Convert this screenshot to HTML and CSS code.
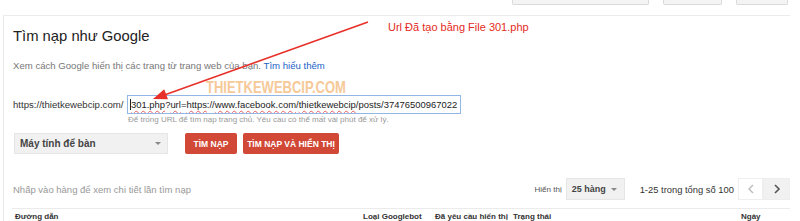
FILE: index.html
```html
<!DOCTYPE html>
<html lang="vi">
<head>
<meta charset="utf-8">
<link rel="stylesheet" href="styles.css">
</head>
<body>
<div class="page">
  <div class="topbar">
    <div class="tb-btn tb-1"></div>
    <div class="tb-btn tb-2"></div>
    <div class="tb-btn tb-3"></div>
  </div>
  <div class="card">
    <div class="title">Tìm nạp như Google</div>
    <div class="subtitle">Xem cách Google hiển thị các trang từ trang web của bạn. <span class="link">Tìm hiểu thêm</span></div>
    <div class="url-row">
      <div class="url-label">https://thietkewebcip.com/</div>
      <div class="url-input"><span class="caret"></span><span class="sp">301.php</span>?<span class="sp">url</span>=<span class="sp">https</span>://<span class="sp">www.facebook.com</span>/<span class="sp">thietkewebcip</span>/posts/37476500967022</div>
    </div>
    <div class="help">Để trống URL để tìm nạp trang chủ. Yêu cầu có thể mất vài phút để xử lý.</div>
    <div class="controls">
      <div class="select select-device"><span>Máy tính để bàn</span><span class="caret-down"></span></div>
      <div class="btn btn-fetch">TÌM NẠP</div>
      <div class="btn btn-render">TÌM NẠP VÀ HIỂN THỊ</div>
    </div>
    <div class="list-row">
      <div class="hint">Nhấp vào hàng để xem chi tiết lần tìm nạp</div>
      <div class="pager">
        <span class="show-label">Hiển thị</span>
        <div class="select select-rows"><span>25 hàng</span><span class="caret-down"></span></div>
        <span class="count">1-25 trong tổng số 100</span>
        <div class="nav nav-prev"><svg width="8" height="10" viewBox="0 0 8 10"><path d="M6 1 L2 5 L6 9" fill="none" stroke="#bbb" stroke-width="1.4"/></svg></div>
        <div class="nav nav-next"><svg width="8" height="10" viewBox="0 0 8 10"><path d="M2 1 L6 5 L2 9" fill="none" stroke="#555" stroke-width="1.6"/></svg></div>
      </div>
    </div>
    <div class="divider"></div>
    <div class="thead">
      <span>Đường dẫn</span>
      <span>Loại Googlebot</span>
      <span>Đã yêu cầu hiển thị</span>
      <span>Trạng thái</span>
      <span>Ngày</span>
    </div>
  </div>

  <div class="note">Url Đã tạo bằng File 301.php</div>
  <div class="watermark">THIETKEWEBCIP.COM</div>
  <svg class="arrow" width="800" height="221" viewBox="0 0 800 221">
    <line x1="368" y1="22" x2="163" y2="95.5" stroke="#e8302a" stroke-width="1.6"/>
    <polygon points="153,99 168,99.2 164.2,89.2" fill="#e8302a"/>
  </svg>
</div>
</body>
</html>
```
FILE: styles.css
```css
html, body {
  margin: 0;
  padding: 0;
  background: #fff;
}
.page {
  position: relative;
  width: 800px;
  height: 221px;
  overflow: hidden;
  font-family: "Liberation Sans", Arial, sans-serif;
  color: #333;
}
.topbar {
  height: 15px;
  display: flex;
  justify-content: flex-end;
  gap: 14px;
  padding-right: 12px;
  box-sizing: border-box;
}
.tb-btn {
  height: 4px;
  border: 1px solid #dadada;
  border-top: 0;
  background: #f4f4f4;
  border-radius: 0 0 2px 2px;
}
.tb-1 { width: 135px; }
.tb-2 { width: 57px; }
.tb-3 { width: 50px; }
.card {
  margin-left: 3px;
  width: 787px;
  height: 206px;
  box-sizing: border-box;
  border-top: 1px solid #ececec;
  border-left: 1px solid #e8e8e8;
  padding-left: 9px;
}
.title {
  margin-top: 10px;
  font-size: 14.8px;
  line-height: 20px;
  color: #222;
}
.subtitle {
  margin-top: 13px;
  font-size: 9.6px;
  line-height: 14px;
  color: #777;
}
.link { color: #1a5fc8; }
.url-row {
  margin-top: 22px;
  display: flex;
  align-items: center;
  height: 19px;
}
.url-label {
  flex: 0 0 114px;
  font-size: 9.6px;
  color: #333;
  white-space: nowrap;
}
.url-input {
  flex: 0 0 334px;
  height: 19px;
  box-sizing: border-box;
  border: 1px solid #92b6e6;
  padding-left: 2px;
  font-size: 9.45px;
  line-height: 17px;
  color: #222;
  white-space: nowrap;
  overflow: hidden;
  display: flex;
  align-items: center;
}
.caret {
  display: inline-block;
  width: 1px;
  height: 11px;
  background: #222;
}
.sp {
  text-decoration: underline wavy #e86060;
  text-decoration-thickness: 1px;
  text-underline-offset: 2px;
}
.help {
  margin-left: 115px;
  font-size: 8px;
  line-height: 12px;
  color: #999;
}
.controls {
  margin-top: 7px;
  display: flex;
  height: 21px;
}
.select {
  display: flex;
  align-items: center;
  justify-content: space-between;
  background: #f1f1f1;
  border: 1px solid #e6e6e6;
  box-sizing: border-box;
  font-weight: bold;
  color: #444;
}
.select-device {
  margin-left: 1px;
  width: 154px;
  padding: 0 6px 0 5px;
  font-size: 10px;
}
.caret-down {
  width: 0;
  height: 0;
  border-left: 3px solid transparent;
  border-right: 3px solid transparent;
  border-top: 3px solid #888;
}
.btn {
  display: flex;
  align-items: center;
  justify-content: center;
  background: #d14836;
  color: #fff;
  font-size: 8.5px;
  font-weight: bold;
  border-radius: 2px;
}
.btn-fetch {
  margin-left: 17px;
  width: 52px;
}
.btn-render {
  margin-left: 6px;
  width: 96px;
}
.list-row {
  margin-top: 24px;
  height: 22px;
  display: flex;
  justify-content: space-between;
  align-items: center;
}
.hint {
  font-size: 9.5px;
  color: #999;
}
.pager {
  display: flex;
  align-items: center;
  height: 22px;
}
.show-label {
  font-size: 8px;
  color: #555;
}
.select-rows {
  margin-left: 4px;
  width: 59px;
  height: 22px;
  padding: 0 7px 0 5px;
  font-size: 9px;
}
.count {
  margin-left: 15px;
  font-size: 9.4px;
  color: #333;
}
.nav {
  height: 22px;
  box-sizing: border-box;
  display: flex;
  align-items: center;
  justify-content: center;
  border: 1px solid #eee;
}
.nav-prev {
  margin-left: 4px;
  width: 25px;
  background: #fff;
}
.nav-next {
  width: 27px;
  background: #f1f1f1;
}
.divider {
  margin-top: 8px;
  margin-left: -1px;
  border-top: 1px solid #ebebeb;
}
.thead {
  margin-top: 3px;
  padding-left: 2px;
  display: grid;
  grid-template-columns: 348px 72px 78px 228px auto;
  font-size: 8px;
  font-weight: bold;
  color: #333;
  white-space: nowrap;
}
.note {
  position: absolute;
  left: 388px;
  top: 21px;
  font-size: 11px;
  color: #e42a22;
}
.watermark {
  position: absolute;
  left: 206px;
  top: 77px;
  font-size: 13px;
  font-weight: bold;
  color: #f6c48e;
  transform: scaleY(1.3);
  transform-origin: top left;
  opacity: 0.9;
}
.arrow {
  position: absolute;
  left: 0;
  top: 0;
  pointer-events: none;
}
```
